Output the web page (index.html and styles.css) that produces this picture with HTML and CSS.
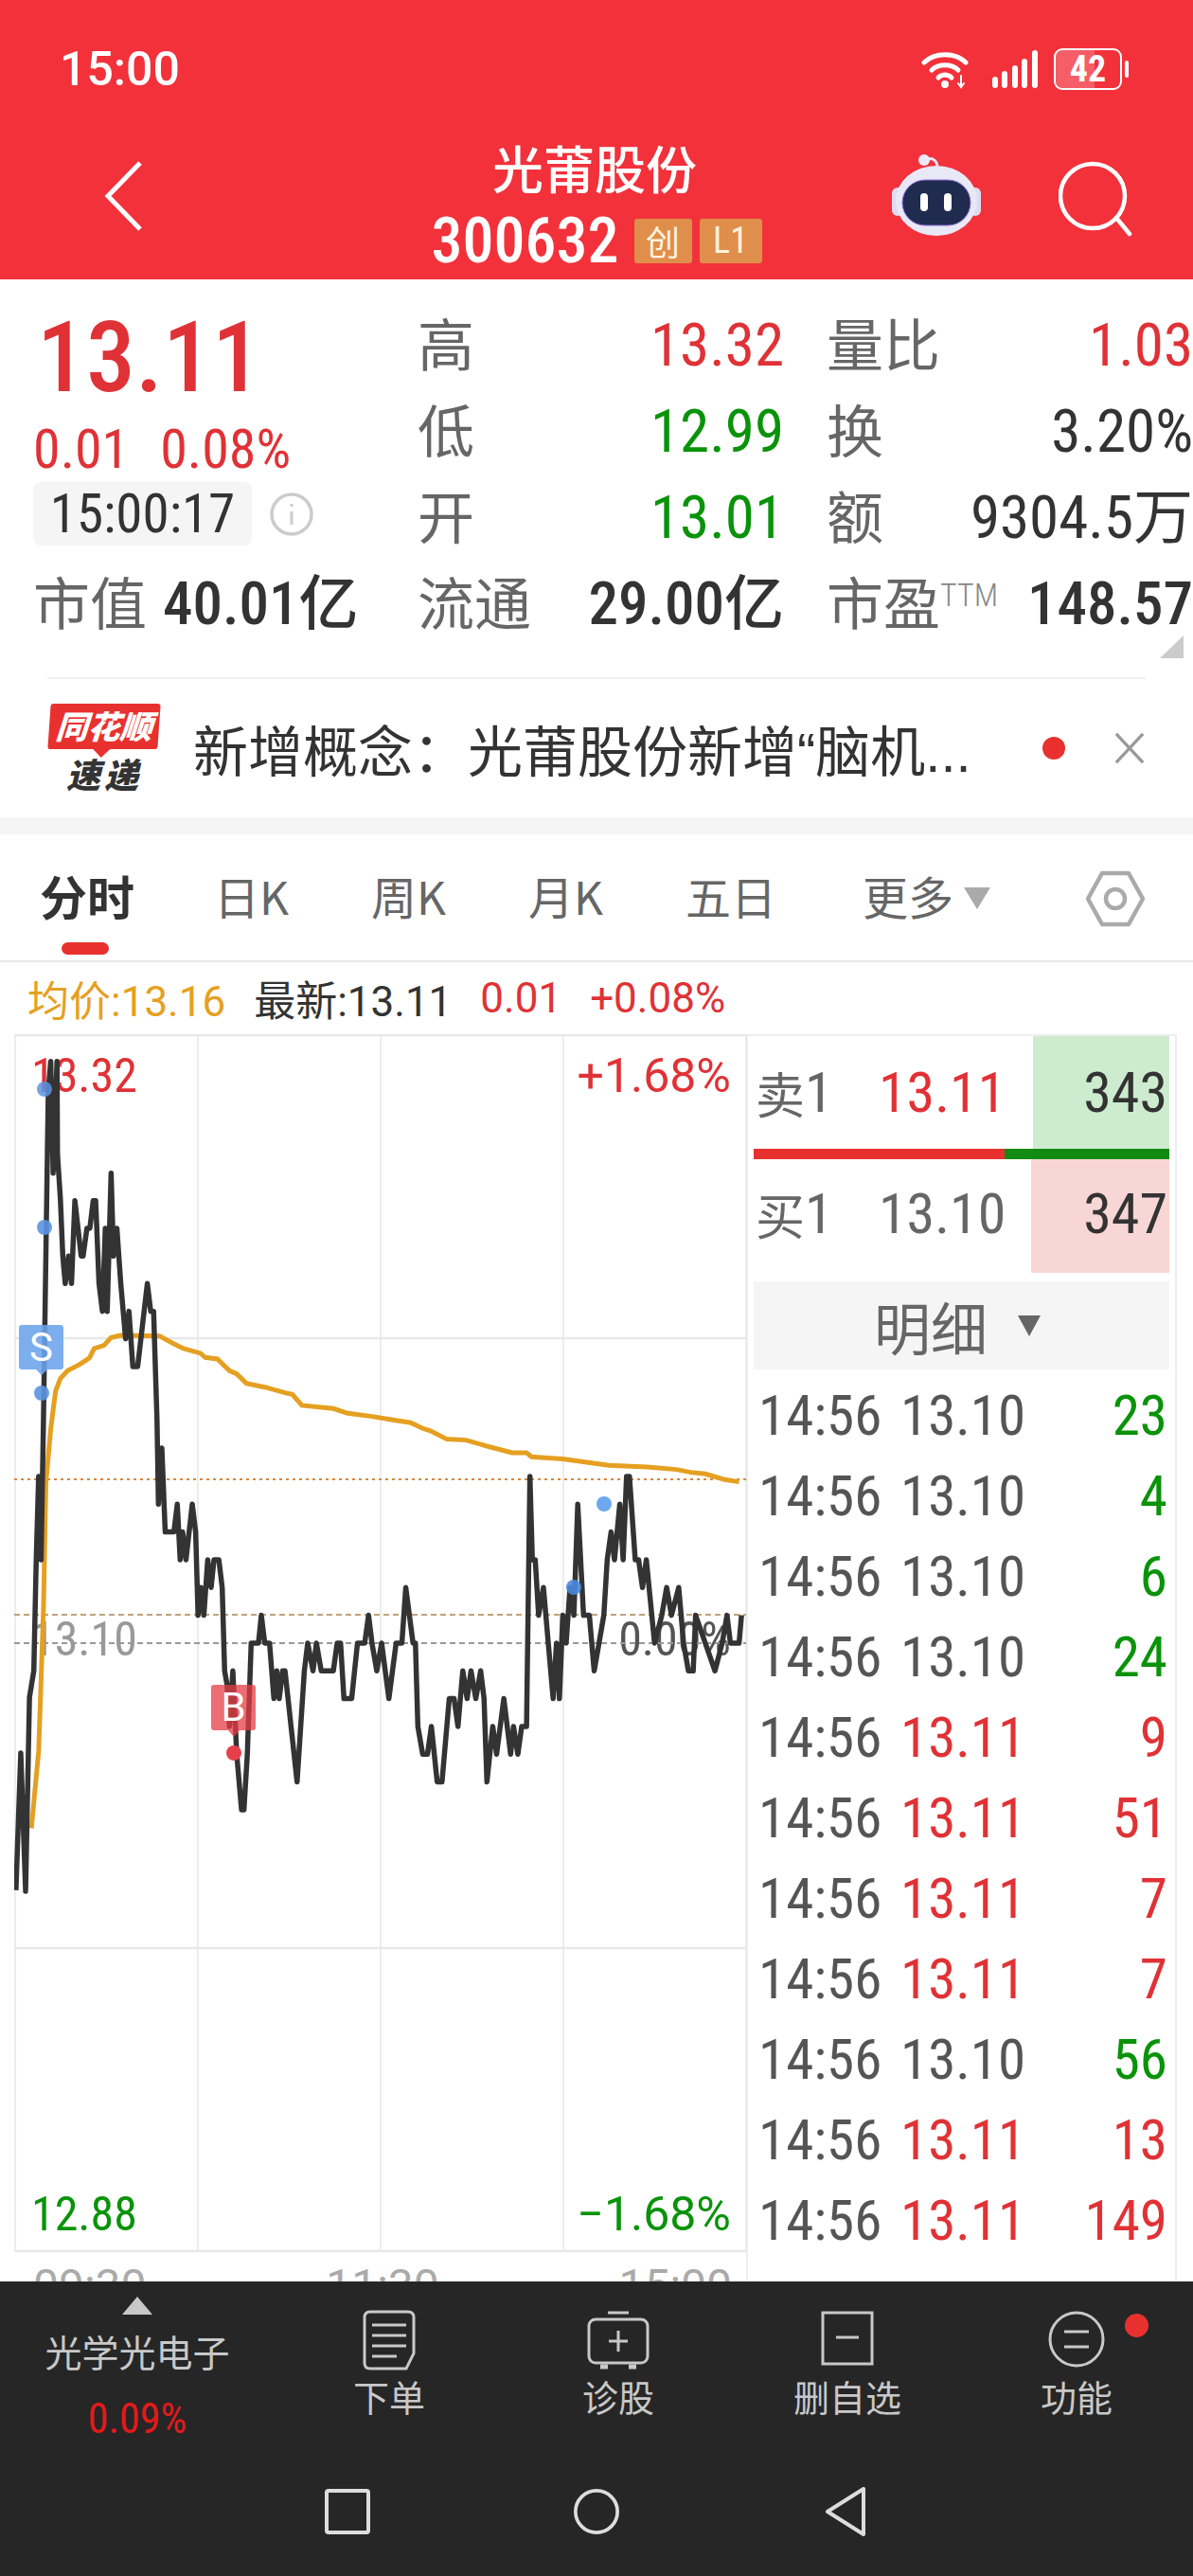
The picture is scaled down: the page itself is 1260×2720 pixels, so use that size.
FILE: index.html
```html
<!DOCTYPE html>
<html>

<head>
  <title>光莆股份 300632</title>
  <link rel="stylesheet" href="styles.css">
</head>

<body>
  <!-- Red header: status bar and stock title -->
  <header class="header">
    <div class="status-bar">
      <span class="clock">15:00</span>
      <div class="status-icons">
        <svg class="wifi-icon" viewBox="0 0 50 42" fill="none" stroke="#fff" stroke-linecap="round">
          <path d="M3 14 C14 3 36 3 47 14" stroke-width="5" />
          <path d="M11 22 C18 15 32 15 39 22" stroke-width="5" />
          <path d="M18 30 C22 26 28 26 32 30" stroke-width="5" />
          <circle cx="25" cy="37" r="4" fill="#fff" stroke="none" />
          <path d="M42 28 V39 M39 36 L42 40 L45 36" stroke-width="2" />
        </svg>
        <svg class="signal-icon" viewBox="0 0 48 40" fill="#fff">
          <rect x="0" y="28" width="6" height="12" rx="3" />
          <rect x="10" y="22" width="6" height="18" rx="3" />
          <rect x="21" y="16" width="6" height="24" rx="3" />
          <rect x="31" y="9" width="6" height="31" rx="3" />
          <rect x="42" y="0" width="6" height="40" rx="3" />
        </svg>
        <div class="battery">
          <div class="battery-fill"></div>
          <span class="battery-level">42</span>
        </div>
        <div class="battery-cap"></div>
      </div>
    </div>
    <nav class="title-bar">
      <svg class="back-icon" viewBox="0 0 40 74" fill="none" stroke="#fff" stroke-width="5">
        <path d="M38 2 L4 37 L38 72" />
      </svg>
      <div class="title-block">
        <div class="stock-name">光莆股份</div>
        <div class="stock-code">
          <span class="code-digits">300632</span>
          <span class="code-tag tag-cjk">创</span>
          <span class="code-tag tag-level">L1</span>
        </div>
      </div>
      <svg class="robot-icon" viewBox="0 0 94 88">
        <path d="M34 7 C42 3 48 7 48 15" fill="none" stroke="#e6e4f4" stroke-width="3" />
        <circle cx="34" cy="7" r="6" fill="#eceaf8" />
        <rect x="0" y="36" width="12" height="30" rx="6" fill="#dcdcf2" />
        <rect x="82" y="36" width="12" height="30" rx="6" fill="#dcdcf2" />
        <ellipse cx="47" cy="50" rx="43" ry="37" fill="#e9e8f7" />
        <rect x="11" y="28" width="72" height="48" rx="24" fill="#1f2c4f" stroke="#8d70d8" stroke-width="1" />
        <rect x="30" y="42" width="8" height="19" rx="4" fill="#fff" />
        <rect x="55" y="42" width="8" height="19" rx="4" fill="#fff" />
      </svg>
      <svg class="search-icon" viewBox="0 0 78 80" fill="none" stroke="#fff" stroke-width="4.5">
        <circle cx="36" cy="37" r="34" />
        <path d="M61 60 L75 77" stroke-linecap="round" />
      </svg>
    </nav>
  </header>

  <!-- Quote figures -->
  <section class="quote">
    <div class="quote-main">
      <div class="last-price">13.11</div>
      <div class="price-change"><span>0.01</span><span>0.08%</span></div>
      <div class="quote-time">
        <span class="time-chip">15:00:17</span>
        <svg class="info-icon" viewBox="0 0 48 48" fill="none" stroke="#ccc" stroke-width="3.5">
          <circle cx="24" cy="24" r="21" />
          <path d="M24 21 V35 M24 13 V16" stroke-width="3" />
        </svg>
      </div>
    </div>
    <div class="stat"><span class="stat-label">高</span><span class="stat-value up">13.32</span></div>
    <div class="stat"><span class="stat-label">量比</span><span class="stat-value up">1.03</span></div>
    <div class="stat"><span class="stat-label">低</span><span class="stat-value down">12.99</span></div>
    <div class="stat"><span class="stat-label">换</span><span class="stat-value">3.20%</span></div>
    <div class="stat"><span class="stat-label">开</span><span class="stat-value down">13.01</span></div>
    <div class="stat"><span class="stat-label">额</span><span class="stat-value">9304.5万</span></div>
    <div class="stat stat-cap stat-strong"><span class="stat-label">市值</span><span class="stat-value">40.01亿</span></div>
    <div class="stat stat-strong"><span class="stat-label">流通</span><span class="stat-value">29.00亿</span></div>
    <div class="stat stat-strong"><span class="stat-label">市盈<sup class="ttm">TTM</sup></span><span class="stat-value">148.57</span></div>
    <div class="corner-mark"></div>
  </section>

  <!-- News strip -->
  <section class="news">
    <div class="news-logo">
      <div class="logo-top">同花顺</div>
      <div class="logo-bottom">速递</div>
    </div>
    <div class="news-text">新增概念：光莆股份新增“脑机...</div>
    <span class="news-dot"></span>
    <svg class="news-close" viewBox="0 0 34 36" fill="none" stroke="#999" stroke-width="3.5">
      <path d="M2 2 L32 34 M32 2 L2 34" />
    </svg>
  </section>

  <div class="band"></div>

  <!-- Period tabs -->
  <div class="tabs">
    <span class="tab active">分时</span>
    <span class="tab">日K</span>
    <span class="tab">周K</span>
    <span class="tab">月K</span>
    <span class="tab">五日</span>
    <span class="tab tab-more">更多<i class="more-arrow"></i></span>
    <svg class="hex-icon" viewBox="0 0 62 60" fill="none" stroke="#aaa" stroke-width="4.5">
      <path d="M17 3 H45 L60 30 L45 57 H17 L2 30 Z" stroke-linejoin="round" />
      <circle cx="31" cy="30" r="10" />
    </svg>
  </div>

  <div class="legend">
    <span class="legend-avg">均价:13.16</span>
    <span class="legend-last">最新:13.11</span>
    <span class="up">0.01</span>
    <span class="up">+0.08%</span>
  </div>

  <div class="market">
    <div class="chart-col">
      <div class="chart">
        <span class="axis-label top-left up">13.32</span>
        <span class="axis-label top-right up">+1.68%</span>
        <span class="axis-label mid-left">13.10</span>
        <span class="axis-label mid-right">0.00%</span>
        <span class="axis-label low-left down">12.88</span>
        <span class="axis-label low-right down">−1.68%</span>

        <svg class="chart-canvas" viewBox="15 1093 775 1287" fill="none">
          <g stroke="#e8e8e8" stroke-width="1.5">
            <path d="M16 1093 V2379 M209 1093 V2379 M402 1093 V2379 M595 1093 V2379 M788 1093 V2379" />
            <path d="M15 1094 H788 M15 1414 H788 M15 2058 H788 M15 2378 H788" stroke-width="2.5" />
          </g>
          <path d="M15 1563 H788" stroke="#d9873f" stroke-width="2" stroke-dasharray="3 4" />
          <path d="M15 1706 H788" stroke="#bfa27a" stroke-width="2" stroke-dasharray="6 4" />
          <path d="M15 1736 H788" stroke="#999" stroke-width="2" stroke-dasharray="6 4" />
          <g transform="translate(0 1000) scale(.5102 .3333)">
            <polyline vector-effect="non-scaling-stroke" stroke="#e5a021" stroke-width="5"
              points="65,2795 80,2550 90,2100 95,1700 105,1530 115,1410 125,1370 140,1345 165,1325 185,1305 195,1275 215,1265 230,1240 250,1233 330,1235 360,1260 380,1275 415,1290 425,1303 450,1308 475,1345 490,1355 510,1385 550,1398 590,1415 605,1420 625,1455 690,1465 720,1480 770,1490 810,1500 850,1510 875,1528 890,1535 925,1562 965,1565 1010,1585 1060,1605 1090,1605 1100,1618 1135,1622 1165,1625 1260,1645 1340,1650 1400,1658 1430,1667 1460,1672 1500,1690 1530,1697" />
            <polyline vector-effect="non-scaling-stroke" stroke="#333" stroke-width="5.5" stroke-linejoin="round"
              points="33,2991 43,2556 53,2994 61,2380 70,2296 75,1944 80,1680 85,1944 90,1500 100,456 105,365 110,719 118,365 119,660 125,800 130,982 135,1069 142,982 148,1069 155,806 168,982 172,982 180,894 186,894 193,806 198,806 205,1069 212,1157 218,894 222,1157 230,719 235,982 242,894 250,1069 260,1244 267,1157 275,1332 285,1332 305,1069 312,1157 318,1157 325,1500 328,1768 335,1590 342,1856 360,1856 367,1768 373,1944 378,1856 385,1944 398,1768 405,1856 410,2120 416,2032 422,2120 430,1944 437,2032 443,1944 453,1944 460,2032 465,2296 470,2340 475,2472 482,2296 490,2560 500,2736 505,2736 512,2560 520,2208 527,2208 535,2208 541,2120 548,2208 558,2208 567,2384 573,2296 578,2384 585,2296 590,2296 615,2648 630,2296 637,2208 648,2296 655,2208 665,2296 690,2296 698,2208 705,2208 712,2384 728,2384 740,2208 755,2208 763,2120 770,2208 780,2296 790,2208 805,2384 820,2208 832,2208 840,2032 855,2208 860,2208 865,2472 875,2560 885,2560 893,2472 905,2648 915,2648 930,2384 940,2384 948,2472 958,2296 967,2384 975,2296 985,2384 995,2296 1002,2384 1008,2648 1020,2472 1028,2560 1043,2384 1057,2560 1063,2472 1072,2560 1080,2472 1090,2472 1097,1680 1102,1944 1108,1944 1115,2120 1125,2032 1135,2208 1145,2384 1152,2208 1158,2384 1165,2120 1172,2208 1180,2032 1188,2120 1196,1768 1208,2120 1220,2120 1230,2296 1240,2208 1250,2120 1257,1944 1265,1856 1272,1944 1283,1768 1290,1944 1297,1680 1303,1680 1315,1944 1322,1944 1330,2032 1338,1944 1355,2208 1370,2120 1380,2032 1390,2120 1405,2032 1415,2208 1425,2296 1435,2296 1440,2120 1460,2208 1480,2296 1495,2208 1505,2120 1512,2208 1530,2208 1535,2120" />
          </g>
          <circle cx="47" cy="1151" r="8" fill="#5b94e0" fill-opacity=".85" />
          <circle cx="47" cy="1297" r="8" fill="#5b94e0" fill-opacity=".9" />
          <circle cx="44" cy="1472" r="8" fill="#5b94e0" fill-opacity=".9" />
          <circle cx="606" cy="1677" r="8" fill="#4a8ade" fill-opacity=".9" />
          <circle cx="638" cy="1589" r="8" fill="#6ba8ee" />
          <circle cx="247" cy="1852" r="8" fill="#e8404a" />
          <path d="M23 1400 H64 Q67 1400 67 1403 V1444 Q67 1447 64 1447 H50 L44 1453 L38 1447 H23 Q20 1447 20 1444 V1403 Q20 1400 23 1400 Z" fill="#6ba4ec" fill-opacity=".88" />
          <text class="marker-text" x="43.500" y="1438">S</text>
          <path d="M226 1780 H267 Q270 1780 270 1783 V1825 Q270 1828 267 1828 H253 L247 1835 L241 1828 H226 Q223 1828 223 1825 V1783 Q223 1780 226 1780 Z" fill="#e63c44" fill-opacity=".75" />
          <text class="marker-text" x="246.500" y="1818">B</text>
        </svg>
      </div>
      <div class="time-axis"><span>09:30</span><span>11:30</span><span>15:00</span></div>
    </div>

    <aside class="side">
      <div class="book-row book-sell">
        <span class="book-label"><b>卖</b>1</span>
        <span class="book-price up">13.11</span>
        <span class="book-vol">343</span>
      </div>
      <div class="book-bar"><div class="bar-buy"></div><div class="bar-sell"></div></div>
      <div class="book-row book-buy">
        <span class="book-label"><b>买</b>1</span>
        <span class="book-price">13.10</span>
        <span class="book-vol">347</span>
      </div>
      <div class="detail-head">明细<i class="detail-arrow"></i></div>
      <div class="ticks">
        <div class="tick"><span>14:56</span><span>13.10</span><span class="down">23</span></div>
        <div class="tick"><span>14:56</span><span>13.10</span><span class="down">4</span></div>
        <div class="tick"><span>14:56</span><span>13.10</span><span class="down">6</span></div>
        <div class="tick"><span>14:56</span><span>13.10</span><span class="down">24</span></div>
        <div class="tick"><span>14:56</span><span class="up">13.11</span><span class="up">9</span></div>
        <div class="tick"><span>14:56</span><span class="up">13.11</span><span class="up">51</span></div>
        <div class="tick"><span>14:56</span><span class="up">13.11</span><span class="up">7</span></div>
        <div class="tick"><span>14:56</span><span class="up">13.11</span><span class="up">7</span></div>
        <div class="tick"><span>14:56</span><span>13.10</span><span class="down">56</span></div>
        <div class="tick"><span>14:56</span><span class="up">13.11</span><span class="up">13</span></div>
        <div class="tick"><span>14:56</span><span class="up">13.11</span><span class="up">149</span></div>
      </div>
    </aside>
  </div>

  <!-- Dark action dock -->
  <footer class="dock">
    <div class="dock-actions">
      <div class="sector">
        <i class="sector-arrow"></i>
        <div class="sector-name">光学光电子</div>
        <div class="sector-change">0.09%</div>
      </div>
      <div class="action">
        <svg class="action-icon" viewBox="0 0 56 64" fill="none" stroke="#c8c8c8" stroke-width="3">
          <path d="M8 2 H48 Q54 2 54 8 V46 L46 62 H8 Q2 62 2 56 V8 Q2 2 8 2 Z" />
          <path d="M10 16 H46 M10 27 H46 M10 38 H46 M10 49 H36" />
        </svg>
        <span>下单</span>
      </div>
      <div class="action">
        <svg class="action-icon" viewBox="0 0 66 64" fill="none" stroke="#c8c8c8" stroke-width="3">
          <path d="M22 3 H44" />
          <rect x="2" y="10" width="62" height="46" rx="7" />
          <path d="M33 22 V44 M23 33 H43" />
          <path d="M14 60 H22 M44 60 H52" stroke-width="5" />
        </svg>
        <span>诊股</span>
      </div>
      <div class="action">
        <svg class="action-icon" viewBox="0 0 56 64" fill="none" stroke="#c8c8c8" stroke-width="3">
          <rect x="2" y="3" width="52" height="54" />
          <path d="M16 29 H40" />
        </svg>
        <span>删自选</span>
      </div>
      <div class="action">
        <svg class="action-icon" viewBox="0 0 60 64" fill="none" stroke="#c8c8c8" stroke-width="3">
          <circle cx="30" cy="31" r="28" />
          <path d="M17 23 H43 M17 39 H43" />
        </svg>
        <span>功能</span>
        <i class="action-dot"></i>
      </div>
    </div>
    <div class="sys-nav">
      <svg class="sys-icon" viewBox="0 0 48 52" fill="none" stroke="#ddd" stroke-width="4">
        <rect x="2" y="4" width="44" height="44" rx="2" />
      </svg>
      <svg class="sys-icon" viewBox="0 0 52 52" fill="none" stroke="#ddd" stroke-width="4">
        <circle cx="26" cy="26" r="24" />
      </svg>
      <svg class="sys-icon" viewBox="0 0 44 52" fill="none" stroke="#ddd" stroke-width="4" stroke-linejoin="round">
        <path d="M41 2 V50 L3 26 Z" />
      </svg>
    </div>
  </footer>
</body>

</html>
```

FILE: styles.css
```css
/* Reset */
html,
body {
  margin: 0;
  padding: 0;
}

body {
  width: 1260px;
  height: 2720px;
  overflow: hidden;
  background-color: #fff;
  color: #333;
  font-family: Roboto, "Noto Sans CJK SC", sans-serif;
  font-stretch: 85%;
  display: flex;
  flex-direction: column;
}

.up {
  color: #e03236;
}

.down {
  color: #0a930a;
}

/* Header */
.header {
  height: 295px;
  flex: none;
  background-color: #f2313b;
  color: #fff;
}

.status-bar {
  height: 145px;
  display: flex;
  align-items: center;
  justify-content: space-between;
  padding: 0 68px 0 63px;
}

.clock {
  font-size: 50px;
  font-stretch: 96%;
  font-weight: 500;
}

.status-icons {
  display: flex;
  align-items: center;
}

.wifi-icon {
  width: 50px;
  height: 42px;
  margin-right: 25px;
}

.signal-icon {
  width: 48px;
  height: 40px;
  margin-right: 17px;
}

.battery {
  width: 68px;
  height: 40px;
  border: 2.5px solid #fff;
  border-radius: 9px;
  position: relative;
  display: flex;
  align-items: center;
  justify-content: center;
  overflow: hidden;
}

.battery-fill {
  position: absolute;
  left: 0;
  top: 0;
  bottom: 0;
  width: 60%;
  background-color: rgba(255, 255, 255, 0.22);
}

.battery-level {
  position: relative;
  font-size: 38px;
  font-weight: 700;
}

.battery-cap {
  width: 4px;
  height: 18px;
  margin-left: 3px;
  border-radius: 2px;
  background-color: #fff;
}

.title-bar {
  height: 150px;
  position: relative;
}

.back-icon {
  position: absolute;
  left: 110px;
  top: 28px;
  width: 40px;
  height: 74px;
}

.title-block {
  text-align: center;
}

.stock-name {
  font-family: "Noto Sans CJK SC", sans-serif;
  font-size: 54px;
  font-weight: 500;
  line-height: 70px;
  margin-top: -3px;
  margin-left: -4px;
}

.stock-code {
  display: flex;
  align-items: center;
  justify-content: center;
  height: 70px;
  margin-top: 7px;
}

.code-digits {
  font-size: 66px;
  font-weight: 500;
  font-stretch: 86%;
}

.code-tag {
  height: 47px;
  border-radius: 3px;
  background-color: #e08e4b;
  color: #fff3df;
  font-size: 38px;
  line-height: 47px;
  text-align: center;
  margin-left: 8px;
}

.tag-cjk {
  width: 61px;
  margin-left: 16px;
  font-family: "Noto Sans CJK SC", sans-serif;
  font-size: 36px;
}

.tag-level {
  width: 66px;
}

.robot-icon {
  position: absolute;
  left: 942px;
  top: 20px;
  width: 94px;
  height: 88px;
}

.search-icon {
  position: absolute;
  left: 1118px;
  top: 28px;
  width: 78px;
  height: 80px;
}

/* Quote grid */
.quote {
  height: 420px;
  flex: none;
  box-sizing: border-box;
  padding: 24px 0 0 38px;
  display: grid;
  grid-template-columns: 358px 387px 387px;
  grid-template-rows: repeat(4, 91px);
  column-gap: 45px;
  position: relative;
  font-size: 63px;
}

.quote-main {
  grid-row: 1 / 4;
  position: relative;
}

.last-price {
  color: #e03236;
  font-size: 104px;
  font-weight: 500;
  line-height: 110px;
  margin-top: 4px;
  margin-left: 1px;
}

.price-change {
  display: flex;
  gap: 33px;
  color: #e03236;
  font-size: 58px;
  line-height: 60px;
  margin-top: 11px;
  margin-left: -3px;
}

.quote-time {
  display: flex;
  align-items: center;
  gap: 18px;
  margin-top: 5px;
  margin-left: -3px;
}

.time-chip {
  width: 231px;
  height: 67px;
  line-height: 67px;
  border-radius: 8px;
  background-color: #f5f5f5;
  text-align: center;
  font-size: 57px;
}

.info-icon {
  width: 48px;
  height: 48px;
}

.stat {
  display: flex;
  align-items: center;
  justify-content: space-between;
  height: 91px;
  line-height: 91px;
}

.stat-cap {
  justify-content: flex-start;
  gap: 17px;
  margin-left: -3px;
}

.stat-strong .stat-value {
  font-weight: 500;
}

.stat-label {
  font-family: "Noto Sans CJK SC", sans-serif;
  font-size: 60px;
  color: #666;
  white-space: nowrap;
  margin-top: -8px;
}

.stat-value {
  white-space: nowrap;
}

.ttm {
  font-family: Roboto, sans-serif;
  font-size: 34px;
  font-weight: 300;
  color: #888;
  vertical-align: 20px;
  line-height: 0;
}

.corner-mark {
  position: absolute;
  right: 10px;
  bottom: 20px;
  width: 0;
  height: 0;
  border-left: 25px solid transparent;
  border-bottom: 24px solid #ccc;
}

/* News strip */
.news {
  height: 148px;
  flex: none;
  box-sizing: border-box;
  margin: 0 50px;
  border-top: 2px solid #eee;
  display: flex;
  align-items: center;
  position: relative;
}

.news-logo {
  width: 116px;
  flex: none;
  margin-left: 2px;
  text-align: center;
  font-family: "Noto Sans CJK SC", sans-serif;
  font-weight: 900;
  font-style: italic;
}

.logo-top {
  height: 48px;
  line-height: 46px;
  background-color: #e8312f;
  color: #fff;
  font-size: 34px;
  border-radius: 3px;
  transform: skewX(-4deg);
  position: relative;
}

.logo-top::after {
  content: "";
  position: absolute;
  left: 48px;
  top: 48px;
  border-left: 9px solid transparent;
  border-right: 9px solid transparent;
  border-top: 9px solid #e8312f;
}

.logo-bottom {
  height: 46px;
  line-height: 50px;
  font-size: 36px;
  letter-spacing: 4px;
  color: #333;
}

.news-text {
  margin-left: 36px;
  width: 842px;
  flex: none;
  font-family: "Liberation Sans", "Noto Sans CJK SC", sans-serif;
  font-size: 58px;
  white-space: nowrap;
  color: #333;
}

.news-dot {
  width: 24px;
  height: 24px;
  margin-left: 55px;
  flex: none;
  border-radius: 50%;
  background-color: #e8312f;
}

.news-close {
  width: 32px;
  height: 34px;
  margin-left: 52px;
  flex: none;
}

.band {
  height: 18px;
  flex: none;
  background-color: #f5f5f5;
}

/* Tabs */
.tabs {
  height: 135px;
  flex: none;
  box-sizing: border-box;
  padding: 0 0 6px 42px;
  border-bottom: 2px solid #e8e8e8;
  display: flex;
  align-items: center;
  gap: 87px;
  position: relative;
  font-family: "Noto Sans CJK SC", sans-serif;
  font-size: 48px;
  color: #666;
}

.tab {
  position: relative;
  white-space: nowrap;
}

.tab.active {
  color: #333;
  font-size: 50px;
  font-weight: 700;
  margin-right: -3px;
}

.tab.active::after {
  content: "";
  position: absolute;
  left: 23px;
  top: 86px;
  width: 50px;
  height: 13px;
  border-radius: 7px;
  background-color: #e8312f;
}

.tab-more {
  margin-left: 4px;
}

.more-arrow {
  display: inline-block;
  margin-left: 11px;
  border-left: 14px solid transparent;
  border-right: 14px solid transparent;
  border-top: 23px solid #aaa;
  vertical-align: 6px;
}

.hex-icon {
  position: absolute;
  left: 1147px;
  top: 38px;
  width: 62px;
  height: 60px;
}

/* Legend row */
.legend {
  height: 76px;
  flex: none;
  box-sizing: border-box;
  padding: 0 0 0 29px;
  display: flex;
  align-items: center;
  gap: 30px;
  font-size: 44px;
  font-stretch: 88%;
}

.legend-avg {
  color: #e5a021;
}

/* Chart and trade list */
.market {
  flex: 1;
  min-height: 0;
  display: flex;
  overflow: hidden;
}

.chart-col {
  width: 788px;
  flex: none;
  padding-left: 15px;
  box-sizing: border-box;
}

.chart {
  width: 775px;
  height: 1287px;
  position: relative;
  font-size: 50px;
  font-stretch: 92%;
}

.chart-canvas {
  position: absolute;
  left: 0;
  top: 0;
  width: 775px;
  height: 1287px;
}

.marker-text {
  fill: #fff;
  font-size: 42px;
  text-anchor: middle;
}

.axis-label {
  position: absolute;
  line-height: 50px;
}

.top-left {
  left: 18px;
  top: 19px;
  font-stretch: 85%;
}

.top-right {
  right: 18px;
  top: 19px;
}

.mid-left {
  left: 18px;
  top: 614px;
  font-stretch: 85%;
  color: #999;
}

.mid-right {
  right: 18px;
  top: 614px;
  font-stretch: 85%;
  color: #555;
}

.low-left {
  left: 18px;
  top: 1221px;
  font-stretch: 85%;
}

.low-right {
  right: 18px;
  top: 1221px;
}

.time-axis {
  display: flex;
  justify-content: space-between;
  padding: 0 15px 0 20px;
  margin-top: 10px;
  font-size: 48px;
  font-stretch: 92%;
  line-height: 50px;
  color: #aaa;
}

.side {
  width: 455px;
  flex: none;
  box-sizing: border-box;
  padding: 0 6px;
  border: 2px solid #eee;
  border-width: 2px 2px 0;
}

.book-row {
  height: 119px;
  display: grid;
  grid-template-columns: 132px 163px 1fr;
  align-items: stretch;
  font-size: 60px;
}

.book-buy {
  grid-template-columns: 132px 161px 1fr;
  height: 120px;
}

.book-label,
.book-price,
.book-vol {
  display: flex;
  align-items: center;
}

.book-buy .book-label,
.book-buy .book-price,
.book-buy .book-vol {
  padding-bottom: 5px;
}

.book-label {
  padding-left: 2px;
  color: #666;
}

.book-label b {
  font-family: "Noto Sans CJK SC", sans-serif;
  font-size: 52px;
  font-weight: 400;
}

.book-price {
  color: #666;
}

.book-price.up {
  color: #e03236;
}

.book-vol {
  justify-content: flex-end;
  padding-right: 2px;
  color: #333;
}

.book-sell .book-vol {
  background-color: #cdeccf;
}

.book-buy .book-vol {
  background-color: #f9d6d6;
}

.book-bar {
  height: 11px;
  display: flex;
}

.bar-buy {
  width: 265px;
  background-color: #e8312f;
}

.bar-sell {
  flex: 1;
  background-color: #128b12;
}

.detail-head {
  height: 93px;
  margin-top: 9px;
  background-color: #f5f5f5;
  display: flex;
  align-items: center;
  padding-left: 127px;
  font-family: "Noto Sans CJK SC", sans-serif;
  font-size: 60px;
  color: #666;
}

.detail-arrow {
  margin-left: 32px;
  border-left: 12px solid transparent;
  border-right: 12px solid transparent;
  border-top: 22px solid #666;
}

.ticks {
  padding-top: 6px;
}

.tick {
  height: 85px;
  display: grid;
  grid-template-columns: 150px 1fr auto;
  align-items: center;
  padding: 0 2px 0 5px;
  font-size: 59px;
  color: #555;
}

/* Dock */
.dock {
  height: 311px;
  flex: none;
  background-color: #262626;
  color: #c8c8c8;
  font-family: "Noto Sans CJK SC", sans-serif;
}

.dock-actions {
  height: 200px;
  display: grid;
  grid-template-columns: 290px repeat(4, 242px);
  font-size: 38px;
}

.sector {
  display: flex;
  flex-direction: column;
  align-items: center;
  padding-top: 16px;
}

.sector-arrow {
  border-left: 16px solid transparent;
  border-right: 16px solid transparent;
  border-bottom: 19px solid #c8c8c8;
}

.sector-name {
  font-size: 39px;
  line-height: 50px;
  margin-top: 13px;
}

.sector-change {
  margin-top: 22px;
  line-height: 50px;
  color: #e21a1a;
  font-family: Roboto, sans-serif;
  font-size: 44px;
}

.action {
  position: relative;
  display: flex;
  flex-direction: column;
  align-items: center;
  padding-top: 30px;
}

.action-icon {
  height: 64px;
  width: 66px;
}

.action span {
  line-height: 50px;
  margin-top: 2px;
}

.action-dot {
  position: absolute;
  left: 172px;
  top: 34px;
  width: 25px;
  height: 25px;
  border-radius: 50%;
  background-color: #e8312f;
}

.sys-nav {
  height: 60px;
  padding-top: 17px;
  display: flex;
  justify-content: center;
  gap: 215px;
}

.sys-icon {
  height: 52px;
  width: 48px;
}
```
